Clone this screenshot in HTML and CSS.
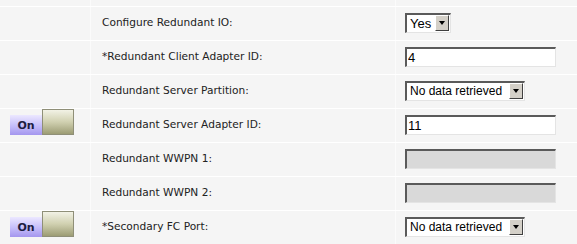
FILE: index.html
```html
<!DOCTYPE html>
<html>
<head>
    <title>Redundant IO</title>
    <link rel="stylesheet" href="styles.css">
</head>
<body>
    <div class="form">
        <div class="row top-row">
            <div class="cell toggle-cell"></div>
            <div class="cell label"></div>
            <div class="cell field"></div>
        </div>

        <div class="row">
            <div class="cell toggle-cell"></div>
            <div class="cell label">Configure Redundant IO:</div>
            <div class="cell field">
                <div class="fake-select select-short">
                    <span class="select-text">Yes</span>
                    <span class="select-arrow"></span>
                </div>
            </div>
        </div>

        <div class="row">
            <div class="cell toggle-cell"></div>
            <div class="cell label">*Redundant Client Adapter ID:</div>
            <div class="cell field">
                <input type="text" class="text-box" value="4">
            </div>
        </div>

        <div class="row">
            <div class="cell toggle-cell"></div>
            <div class="cell label">Redundant Server Partition:</div>
            <div class="cell field">
                <div class="fake-select select-long">
                    <span class="select-text">No data retrieved</span>
                    <span class="select-arrow"></span>
                </div>
            </div>
        </div>

        <div class="row">
            <div class="cell toggle-cell">
                <div class="toggle">
                    <span class="toggle-on">On</span>
                    <span class="toggle-knob"></span>
                </div>
            </div>
            <div class="cell label">Redundant Server Adapter ID:</div>
            <div class="cell field">
                <input type="text" class="text-box" value="11">
            </div>
        </div>

        <div class="row">
            <div class="cell toggle-cell"></div>
            <div class="cell label">Redundant WWPN 1:</div>
            <div class="cell field">
                <input type="text" class="text-box" disabled>
            </div>
        </div>

        <div class="row">
            <div class="cell toggle-cell"></div>
            <div class="cell label">Redundant WWPN 2:</div>
            <div class="cell field">
                <input type="text" class="text-box" disabled>
            </div>
        </div>

        <div class="row">
            <div class="cell toggle-cell">
                <div class="toggle">
                    <span class="toggle-on">On</span>
                    <span class="toggle-knob"></span>
                </div>
            </div>
            <div class="cell label">*Secondary FC Port:</div>
            <div class="cell field">
                <div class="fake-select select-long">
                    <span class="select-text">No data retrieved</span>
                    <span class="select-arrow"></span>
                </div>
            </div>
        </div>
    </div>
</body>
</html>
```

FILE: styles.css
```css
* {
margin: 0;
padding: 0;
box-sizing: border-box;
}

body {
    font-family: "DejaVu Sans", Verdana, sans-serif;
    font-size: 10.6px;
    background-color: #f5f5f5;
    color: #222222;
    overflow: hidden;
}

.form {
    width: 577px;
}

.row {
    display: grid;
    grid-template-columns: 91px 305px 1fr;
    height: 34px;
    border-bottom: 1px solid #ffffff;
}

.top-row {
    height: 7px;
}

.cell {
    border-right: 1px solid #fbfbfb;
}

.label {
    display: flex;
    align-items: center;
    padding-left: 11px;
    padding-bottom: 3px;
}

.field {
    display: flex;
    align-items: center;
    padding-left: 9px;
    padding-bottom: 2px;
    border-right: none;
}

/* toggle On / knob */
.toggle-cell {
    padding-left: 10px;
}

.toggle {
    display: flex;
    align-items: flex-end;
    height: 26px;
}

.toggle-on {
    width: 32px;
    height: 20px;
    display: flex;
    align-items: center;
    justify-content: center;
    font-weight: bold;
    font-size: 11px;
    color: #1c1c40;
    background: linear-gradient(#ece8ff, #c4bcfa 55%, #a496ee);
}

.toggle-knob {
    width: 32px;
    height: 26px;
    border: 1px solid #8f8f78;
    background: linear-gradient(#f2f2e6, #d0d0b0 50%, #9c9c74);
}

/* inputs */
.text-box {
    width: 151px;
    height: 20px;
    font-family: "Liberation Sans", Arial, sans-serif;
    font-size: 13px;
    color: #000000;
    padding: 0 1px;
    background-color: #ffffff;
    border-style: solid;
    border-width: 2px 1px 1px 2px;
    border-color: #5a5a5a #e4e4e4 #e4e4e4 #5a5a5a;
    outline: none;
}

.text-box:disabled {
    background-color: #d9d9d9;
}

.fake-select {
    display: flex;
    align-items: center;
    height: 20px;
    background-color: #ffffff;
    border-style: solid;
    border-width: 2px 1px 1px 2px;
    border-color: #5a5a5a #e4e4e4 #e4e4e4 #5a5a5a;
    font-family: "Liberation Sans", Arial, sans-serif;
    font-size: 12px;
    color: #000000;
}

.select-short {
    width: 46px;
    font-size: 13px;
}

.select-long {
    width: 120px;
}

.select-text {
    flex: 1;
    padding-left: 3px;
    white-space: nowrap;
    overflow: hidden;
}

.select-arrow {
    position: relative;
    width: 14px;
    height: 16px;
    margin-right: 1px;
    background-color: #d4d0c8;
    border-style: solid;
    border-width: 1px;
    border-color: #ffffff #404040 #404040 #ffffff;
}

.select-arrow::after {
    content: "";
    position: absolute;
    left: 3px;
    top: 5px;
    border-left: 3px solid transparent;
    border-right: 3px solid transparent;
    border-top: 4px solid #000000;
}
```
